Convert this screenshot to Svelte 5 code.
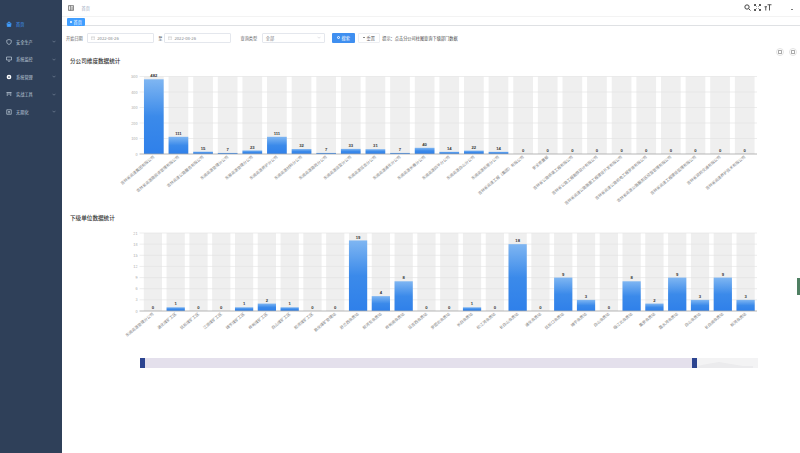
<script>
  const menu = [
    { name: '首页', icon: 'home', active: true },
    { name: '安全生产', icon: 'shield', arrow: true },
    { name: '系统监控', icon: 'monitor', arrow: true },
    { name: '系统管理', icon: 'gear', arrow: true, bright: true },
    { name: '实战工具', icon: 'tool', arrow: true },
    { name: '无期化', icon: 'box', arrow: true }
  ];

  const branch = [
    ['吉林省高速集团有限公司', 482],
    ['吉林省高速路投资管理有限公司', 111],
    ['吉林高速公路服务有限公司', 15],
    ['东南高速管理分公司', 7],
    ['东部高速管理分公司', 23],
    ['东南高速养护分公司', 111],
    ['东南高速材料分公司', 32],
    ['东南高速路政分公司', 7],
    ['东南高速运营分公司', 33],
    ['东南高速延吉分公司', 31],
    ['东南高速通化分公司', 7],
    ['东南高速长春分公司', 40],
    ['东南高速四平分公司', 14],
    ['东南高速白山分公司', 22],
    ['东南高速松原分公司', 14],
    ['吉林省高速工程（集团）有限公司', 0],
    ['安全质量部', 0],
    ['吉林省公路桥梁工程有限公司', 0],
    ['吉林省公路工程勘察设计有限公司', 0],
    ['吉林省高速公路路面工程建设开发有限公司', 0],
    ['吉林省高速公路机电工程安装有限公司', 0],
    ['吉林省高速公路服务区经营管理有限公司', 0],
    ['吉林省高速工程建设监理有限公司', 0],
    ['吉林省润邦交通有限公司', 0],
    ['吉林省高速养护技术有限公司', 0]
  ];

  const unit = [
    ['东南高速管理分公司', 0],
    ['通化煤矿工区', 1],
    ['抚松煤矿工区', 0],
    ['江源煤矿工区', 0],
    ['靖宇煤矿工区', 1],
    ['桦甸煤矿工区', 2],
    ['白山煤矿工区', 1],
    ['蛟河煤矿工区', 0],
    ['敦化煤矿管理站', 0],
    ['舒兰西收费站', 19],
    ['蛟河东收费站', 4],
    ['桦甸南收费站', 8],
    ['延吉西收费站', 0],
    ['安图北收费站', 0],
    ['长白收费站', 1],
    ['松江河收费站', 0],
    ['长白山收费站', 18],
    ['通化收费站', 0],
    ['抚松口收费站', 9],
    ['靖宇收费站', 3],
    ['白山收费站', 0],
    ['临江北收费站', 8],
    ['集安收费站', 2],
    ['露水河收费站', 9],
    ['白山收费站', 3],
    ['长白南收费站', 9],
    ['蛟河收费站', 3]
  ];

  const chart1 = { data: branch, max: 500, step: 100, top: 7.5, height: 77.5, h: 140, id: 'a' };
  const chart2 = { data: unit, max: 21, step: 3, top: 7, height: 78, h: 125, id: 'b' };

  const left = 79.5; // plot x inside the svg, which starts at the sidebar edge
  const plotW = 615.5;

  function ticks(c) {
    const out = [];
    for (let v = 0; v <= c.max; v += c.step) out.push(v);
    return out;
  }
</script>

{#snippet chart(c)}
  {@const band = plotW / c.data.length}
  {@const base = c.top + c.height}
  <svg class="chart" width="738" height={c.h} viewBox="0 0 738 {c.h}">
    <defs>
      <linearGradient id="bar-{c.id}" x1="0" y1="0" x2="0" y2="1">
        <stop offset="0" stop-color="#7fb6f2" />
        <stop offset="0.5" stop-color="#3b8aea" />
        <stop offset="1" stop-color="#2f80ea" />
      </linearGradient>
    </defs>
    {#each c.data as d, i}
      <rect x={left + band * i + band * 0.1} y={c.top} width={band * 0.8} height={c.height} fill="#efefef" />
    {/each}
    {#each ticks(c) as v}
      {@const y = base - (v / c.max) * c.height}
      {#if v > 0}
        <line x1={left - 2} x2={left + plotW} y1={y} y2={y} stroke="#e0e0e0" stroke-width="0.6" />
      {/if}
      <text class="ytick" x={left - 4} y={y + 1.5} text-anchor="end">{v}</text>
    {/each}
    {#each c.data as d, i}
      {@const barH = (d[1] / c.max) * c.height}
      {@const cx = left + band * i + band / 2}
      <rect x={left + band * i + band * 0.1} y={base - barH} width={band * 0.8} height={barH} fill="url(#bar-{c.id})" />
      <text class="value" x={cx} y={base - barH - 1.8} text-anchor="middle">{d[1]}</text>
      <text class="xlabel" transform="translate({cx + 1} {base + 3.6}) rotate(-40)" text-anchor="end">{d[0]}</text>
    {/each}
    <line x1={left - 2} x2={left + plotW} y1={base} y2={base} stroke="#a3a3a3" stroke-width="0.8" />
  </svg>
{/snippet}

<div class="app">
  <aside class="sidebar">
    {#each menu as item}
      <div class="menu-item" class:active={item.active} class:bright={item.bright}>
        <svg class="menu-icon" width="6" height="6" viewBox="0 0 12 12" fill="none" stroke="currentColor" stroke-width="1.4">
          {#if item.icon === 'home'}
            <path d="M1 6 6 1.5 11 6M2.5 5v6h7V5" fill="currentColor" />
          {:else if item.icon === 'shield'}
            <path d="M6 1 10.5 2.5V6Q10.5 9.5 6 11 1.500 9.500 1.500 6V2.500Z" />
          {:else if item.icon === 'monitor'}
            <path d="M1 2h10v6H1zM4 10.500h4" />
          {:else if item.icon === 'gear'}
            <circle cx="6" cy="6" r="3.200" stroke-width="3" />
          {:else if item.icon === 'tool'}
            <path d="M1 3h10M2.500 3v7M9.500 3v7M6 3v5" />
          {:else}
            <path d="M1.500 1.500h9v9h-9zM4 5h4M4 7.500h4" />
          {/if}
        </svg>
        <span>{item.name}</span>
        {#if item.arrow}
          <svg class="chevron" width="4" height="3" viewBox="0 0 8 6" fill="none" stroke="currentColor" stroke-width="1"><path d="M1 1.500 4 4.500 7 1.500" /></svg>
        {/if}
      </div>
    {/each}
  </aside>

  <main class="main">
    <header class="navbar">
      <svg class="hamburger" width="6" height="6" viewBox="0 0 14 14" fill="none" stroke="#444" stroke-width="1.500">
        <path d="M1 1.500h12v11H1zM5.500 1.500v11M8 5h3M8 7.500h3M8 10h3" />
      </svg>
      <span class="crumb">首页</span>
      <div class="nav-right">
        <svg width="7" height="7" viewBox="0 0 14 14" fill="none" stroke="#444" stroke-width="2"><circle cx="6" cy="6" r="4.300" /><path d="M9.500 9.500 13 13" /></svg>
        <svg width="7" height="7" viewBox="0 0 14 14" fill="none" stroke="#444" stroke-width="1.800"><path d="M1 4V1h3M10 1h3v3M13 10v3h-3M4 13H1v-3M1 1l4 4M13 1 9 5M13 13 9 9M1 13l4-4" /></svg>
        <svg width="8" height="7" viewBox="0 0 16 14" fill="none" stroke="#444" stroke-width="1.800"><path d="M7 1.500h8M11 1.500V13M1 5.500h5M3.500 5.500V13" /></svg>
        <span class="avatar-dot"></span>
      </div>
    </header>

    <nav class="tags">
      <span class="tag"><i></i>首页</span>
    </nav>

    <section class="content">
      <div class="filters">
        <span class="label">开始日期</span>
        <div class="input date">
          <svg width="4" height="4" viewBox="0 0 8 8" fill="none" stroke="#bbb" stroke-width="0.800"><path d="M.5 1.500h7v6h-7zM.5 3.500h7" /></svg>
          2022-08-26
        </div>
        <span class="label to">至</span>
        <div class="input date">
          <svg width="4" height="4" viewBox="0 0 8 8" fill="none" stroke="#bbb" stroke-width="0.800"><path d="M.5 1.500h7v6h-7zM.5 3.500h7" /></svg>
          2022-08-26
        </div>
        <span class="label type">查询类型</span>
        <div class="input select">
          全部
          <svg width="4" height="3" viewBox="0 0 8 6" fill="none" stroke="#c0c4cc" stroke-width="1"><path d="M1 1.500 4 4.500 7 1.500" /></svg>
        </div>
        <button class="btn primary"><i class="ring"></i>搜索</button>
        <button class="btn plain"><i class="dash"></i>重置</button>
        <span class="tip">提示：点击分公司柱图查询下级部门数据</span>
        <div class="tools">
          <span class="round"><i></i></span>
          <span class="round"><i></i></span>
        </div>
      </div>

      <h2 class="title first">分公司维度数据统计</h2>
      {@render chart(chart1)}

      <h2 class="title second">下级单位数据统计</h2>
      {@render chart(chart2)}

      <div class="slider">
        <span class="handle"></span>
        <span class="range"></span>
        <span class="handle"></span>
        <span class="rest">
          <svg width="56" height="10" viewBox="0 0 56 10"><path d="M0 8 10 6 22 4 34 6 46 8 56 8V10H0Z" fill="#ebebed" /></svg>
        </span>
      </div>
    </section>
  </main>

  <div class="side-mark"></div>
</div>

<style>
  :global(body) {
    margin: 0;
    background: #fff;
  }

  .app {
    position: relative;
    display: flex;
    width: 800px;
    height: 453px;
    overflow: hidden;
    font-family: 'Noto Sans CJK SC', 'Liberation Sans', sans-serif;
    font-size: 4.2px;
    color: #555;
  }

  .sidebar {
    flex: 0 0 62px;
    padding-top: 15.500px;
    box-sizing: border-box;
    background: #2f4059;
    color: #bfcbd9;
  }

  .menu-item {
    display: flex;
    align-items: center;
    height: 17.500px;
    padding-left: 5.500px;
    gap: 4.500px;
  }
  .menu-item.active {
    color: #409eff;
  }
  .menu-item.bright .menu-icon {
    color: #fff;
  }
  .chevron {
    margin-left: auto;
    margin-right: 6px;
    opacity: 0.7;
  }

  .main {
    flex: 1;
    min-width: 0;
    display: flex;
    flex-direction: column;
  }

  .navbar {
    display: flex;
    align-items: center;
    height: 15.500px;
    padding-left: 6px;
    gap: 6.500px;
  }
  .crumb {
    margin-left: 1px;
    color: #97a8be;
  }
  .nav-right {
    margin-left: auto;
    display: flex;
    align-items: center;
    gap: 3px;
    padding-right: 7.500px;
  }
  .avatar-dot {
    width: 1.500px;
    height: 1.500px;
    margin-left: 16.500px;
    margin-top: 3px;
    border-radius: 50%;
    background: #666;
  }

  .tags {
    height: 10.500px;
    box-sizing: border-box;
    padding: 1.500px 0 0 5px;
    border-top: 0.500px solid #f3f3f3;
    border-bottom: 1px solid #dfe1e4;
  }
  .tag {
    display: inline-flex;
    align-items: center;
    gap: 1.500px;
    height: 8px;
    padding: 0 3px;
    border-radius: 1px;
    background: #409eff;
    color: #fff;
    line-height: 8px;
  }
  .tag i {
    width: 2px;
    height: 2px;
    border-radius: 50%;
    background: #fff;
  }

  .content {
    flex: 1;
    min-height: 0;
    display: flex;
    flex-direction: column;
  }

  .filters {
    position: relative;
    display: flex;
    align-items: center;
    height: 10px;
    margin-top: 6.500px;
    padding-left: 4px;
  }
  .label {
    color: #606266;
    margin-right: 4.500px;
  }
  .label.to {
    margin: 0 2px 0 4px;
  }
  .label.type {
    margin-left: 9px;
  }
  .input {
    display: flex;
    align-items: center;
    height: 10px;
    box-sizing: border-box;
    border: 0.500px solid #e4e7ed;
    border-radius: 1px;
    color: #7d8087;
  }
  .date {
    width: 67px;
    padding-left: 2.500px;
    gap: 2.500px;
  }
  .select {
    width: 63px;
    padding: 0 3px;
    justify-content: space-between;
  }
  .btn {
    display: inline-flex;
    align-items: center;
    justify-content: center;
    gap: 2px;
    height: 10px;
    margin: 0;
    padding: 0;
    border-radius: 1px;
    font: inherit;
  }
  .btn.primary {
    width: 23px;
    margin-left: 7px;
    border: 0;
    background: #3f8ff0;
    color: #fff;
  }
  .btn.plain {
    width: 22px;
    margin-left: 3px;
    border: 0.500px solid #eceef2;
    background: #fff;
    color: #606266;
  }
  .ring {
    width: 3px;
    height: 3px;
    box-sizing: border-box;
    border: 0.600px solid #fff;
    border-radius: 50%;
  }
  .dash {
    width: 2px;
    height: 0.700px;
    background: #888;
  }
  .tip {
    margin-left: 2.500px;
    color: #444;
  }
  .tools {
    position: absolute;
    right: 3px;
    top: 15.500px;
    display: flex;
    gap: 5px;
  }
  .round {
    display: flex;
    align-items: center;
    justify-content: center;
    width: 8px;
    height: 8px;
    box-sizing: border-box;
    border: 0.500px solid #e3e3e3;
    border-radius: 50%;
  }
  .round i {
    width: 2px;
    height: 2px;
    border: 0.400px solid #aaa;
    border-radius: 0.500px;
  }

  .title {
    margin: 0 0 0 8px;
    height: 8px;
    font-size: 5.600px;
    line-height: 8px;
    font-weight: 500;
    color: #333;
  }
  .title.first {
    margin-top: 14.500px;
    margin-bottom: 4px;
  }
  .title.second {
    margin-top: 4.500px;
    margin-bottom: 4px;
  }

  .chart {
    display: block;
    flex: none;
  }
  .ytick {
    font-size: 3.800px;
    fill: #aaa;
  }
  .value {
    font-size: 4.200px;
    font-weight: 700;
    fill: #333;
    font-family: 'Liberation Sans', sans-serif;
  }
  .xlabel {
    font-size: 3.900px;
    fill: #808080;
  }

  .slider {
    display: flex;
    width: 618px;
    height: 10px;
    margin: 7px 0 0 78px;
  }
  .handle {
    flex: 0 0 5px;
    background: #2c4490;
  }
  .range {
    flex: 0 0 547px;
    background: #e4e0ec;
  }
  .rest {
    flex: 1;
    overflow: hidden;
    background: #f3f3f4;
  }
  .rest svg {
    display: block;
  }

  .side-mark {
    position: absolute;
    right: 0;
    top: 278px;
    width: 3px;
    height: 17px;
    background: #4f7f62;
  }
</style>
